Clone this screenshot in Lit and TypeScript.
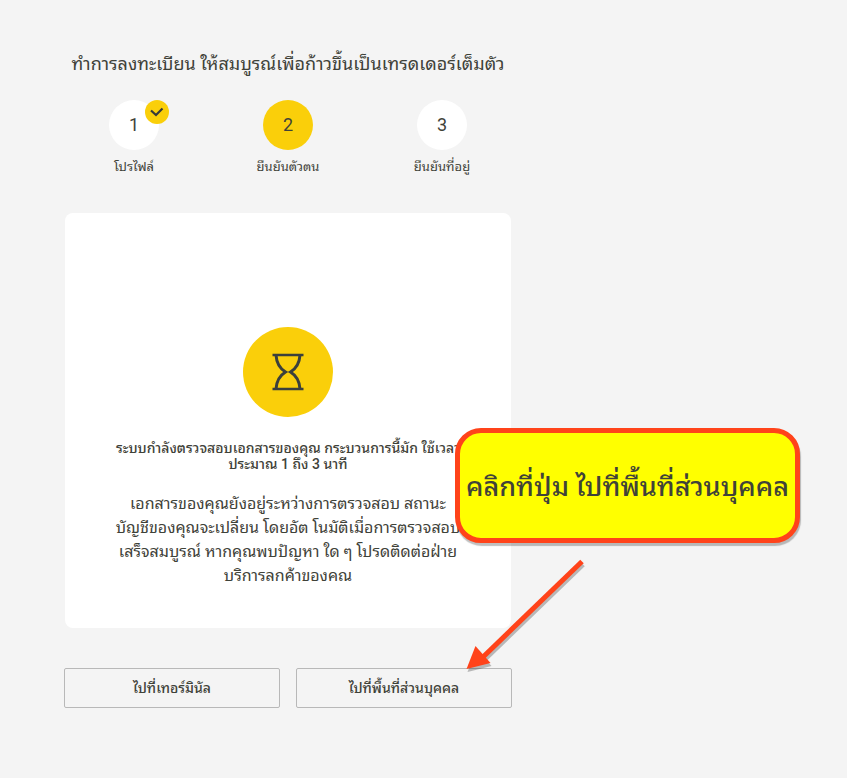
import { LitElement, html, css, svg } from "lit";
import { customElement, state } from "lit/decorators.js";
import { classMap } from "lit/directives/class-map.js";

interface Step {
  label: string;
  done?: boolean;
  current?: boolean;
}

@customElement("app-root")
export class AppRoot extends LitElement {
  static styles = css`
    :host {
      display: block;
      min-height: 100vh;
      box-sizing: border-box;
      padding: 48px 64px 70px;
      background: #f4f4f4;
      color: #3f4239;
      font-family: Roboto, "Noto Sans Thai Looped", "Sarabun", "Loma", "Garuda", "Umpush",
        "Waree", "Noto Sans Thai", sans-serif;
    }
    .page {
      position: relative;
      max-width: 448px;
    }
    h1 {
      margin: 0;
      font-size: 18px;
      line-height: 32px;
      font-weight: 400;
      text-align: center;
      white-space: nowrap;
    }
    .steps {
      display: grid;
      grid-template-columns: repeat(3, 154px);
      justify-content: center;
      margin: 20px 0 0;
      padding: 0;
      list-style: none;
    }
    .step {
      display: flex;
      flex-direction: column;
      align-items: center;
      gap: 5px;
      font-size: 13px;
      line-height: 24px;
      white-space: nowrap;
    }
    .number {
      position: relative;
      width: 50px;
      height: 50px;
      border-radius: 50%;
      background: #fff;
      font-size: 18px;
      line-height: 50px;
      text-align: center;
    }
    .number.current {
      background: #facf0a;
    }
    .tick {
      position: absolute;
      top: 0;
      right: -10px;
      width: 24px;
      height: 24px;
    }
    .card {
      display: flex;
      flex-direction: column;
      align-items: center;
      margin: 34px 1px 0;
      padding: 114px 47px 40px;
      border-radius: 8px;
      background: #fff;
      text-align: center;
      white-space: nowrap;
    }
    .hourglass {
      width: 90px;
      height: 90px;
    }
    h2 {
      margin: 23px 0 0;
      font-size: 14px;
      line-height: 16px;
      font-weight: 500;
    }
    .detail {
      margin: 20px 0 0;
      font-size: 16px;
      line-height: 24px;
    }
    .actions {
      display: grid;
      grid-template-columns: 1fr 1fr;
      gap: 16px;
      margin-top: 40px;
    }
    button {
      height: 40px;
      padding: 0 0 4px;
      border: 1px solid #b8b8b8;
      border-radius: 2px;
      background: transparent;
      color: inherit;
      font: inherit;
      font-size: 14px;
      font-weight: 500;
      cursor: pointer;
    }
    .callout {
      position: absolute;
      top: 380px;
      left: 391px;
      display: flex;
      align-items: center;
      justify-content: center;
      box-sizing: border-box;
      width: 345px;
      height: 115px;
      padding-bottom: 4px;
      border: 5px solid #ff431a;
      border-radius: 26px;
      background: #ffff00;
      box-shadow: 1px 3px 1px #00000040;
      font-size: 27px;
      font-weight: 500;
      white-space: nowrap;
    }
    .arrow {
      position: absolute;
      top: 510px;
      left: 400px;
      width: 124px;
      height: 120px;
      pointer-events: none;
      filter: drop-shadow(1px 3px 0 #00000040);
    }
  `;

  @state() private steps: Step[] = [
    { label: "โปรไฟล์", done: true },
    { label: "ยืนยันตัวตน", current: true },
    { label: "ยืนยันที่อยู่" },
  ];

  private tick = svg`<svg class="tick" viewBox="0 0 24 24" aria-hidden="true">
    <circle cx="12" cy="12" r="12" fill="#facf0a" />
    <path d="M6 10.500 11 15l6.500-6.500" fill="none" stroke="#34383b" stroke-width="2.200" />
  </svg>`;

  render() {
    return html`
      <main class="page">
        <h1>ทำการลงทะเบียน ให้สมบูรณ์เพื่อก้าวขึ้นเป็นเทรดเดอร์เต็มตัว</h1>
        <ol class="steps">
          ${this.steps.map(
            (step, i) => html`<li class="step">
              <div class=${classMap({ number: true, current: !!step.current })}>
                ${i + 1}${step.done ? this.tick : ""}
              </div>
              <span>${step.label}</span>
            </li>`
          )}
        </ol>
        <section class="card">
          <svg class="hourglass" viewBox="0 0 90 90" aria-hidden="true">
            <circle cx="45" cy="45" r="45" fill="#facf0a" />
            <g fill="none" stroke="#3b403c" stroke-width="2.500">
              <path d="M29.500 28H60.500M29.500 62H60.500" />
              <path stroke-width="3" d="M33 28C33.500 36 36 41 42.500 45C36 49 33.500 54 33 62M57 28C56.500 36 54 41 47.500 45C54 49 56.500 54 57 62" />
            </g>
          </svg>
          <h2>
            ระบบกำลังตรวจสอบเอกสารของคุณ กระบวนการนี้มัก ใช้เวลา<br />ประมาณ 1 ถึง 3 นาที
          </h2>
          <p class="detail">
            เอกสารของคุณยังอยู่ระหว่างการตรวจสอบ สถานะ<br />บัญชีของคุณจะเปลี่ยน
            โดยอัต โนมัติเมื่อการตรวจสอบ<br />เสร็จสมบูรณ์ หากคุณพบปัญหา ใด ๆ
            โปรดติดต่อฝ่าย<br />บริการลกค้าของคณ
          </p>
        </section>
        <div class="actions">
          <button type="button">ไปที่เทอร์มินัล</button>
          <button type="button">ไปที่พื้นที่ส่วนบุคคล</button>
        </div>
        <div class="callout" role="note">คลิกที่ปุ่ม ไปที่พื้นที่ส่วนบุคคล</div>
        <svg class="arrow" viewBox="0 0 124 120" aria-hidden="true">
          <path d="M118 3.500 18 100" stroke="#ff431a" stroke-width="5" />
          <path d="M2.500 111 11.500 88 26.500 105Z" fill="#ff431a" />
        </svg>
      </main>
    `;
  }
}
